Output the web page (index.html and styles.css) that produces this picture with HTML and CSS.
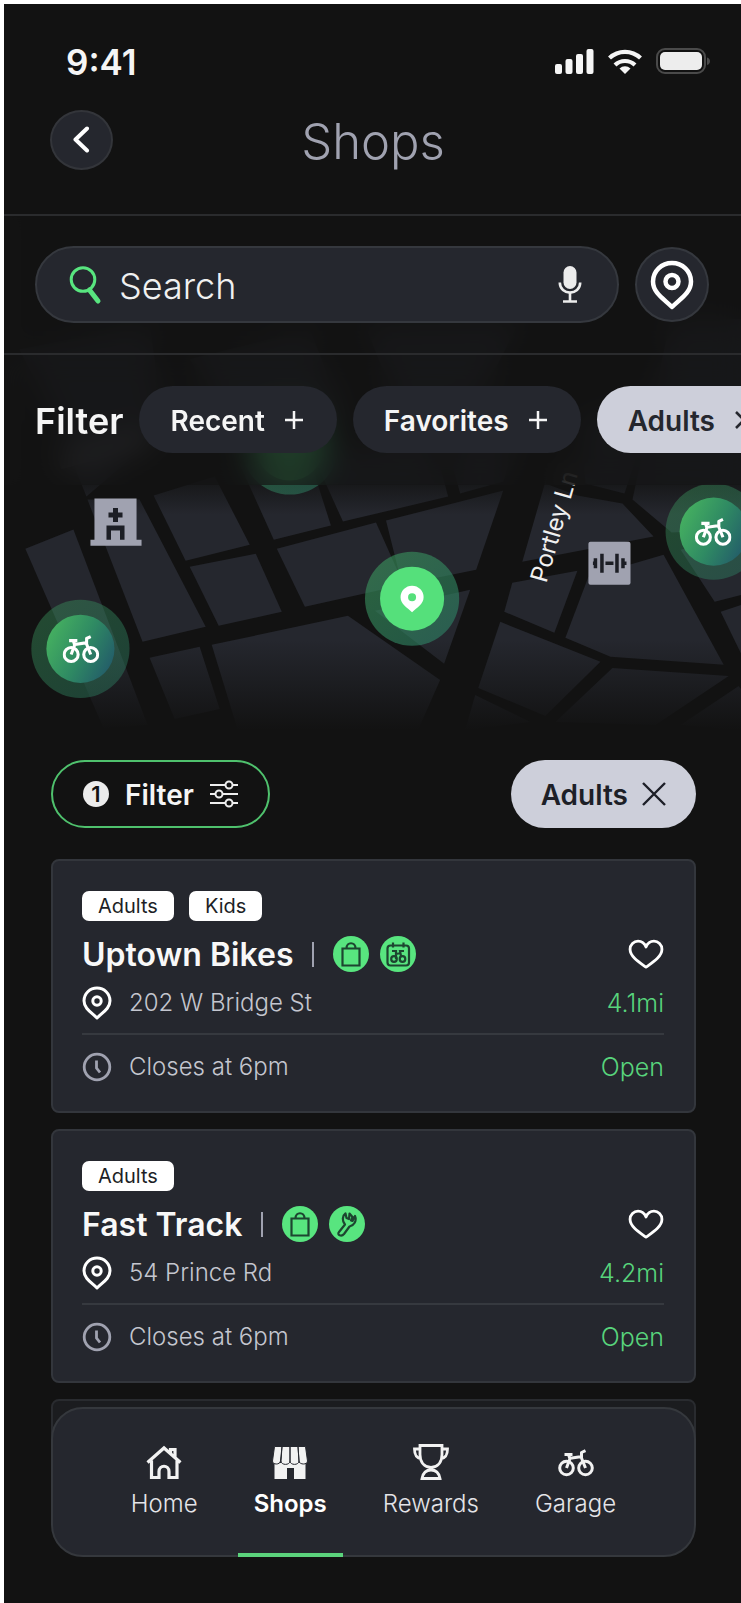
FILE: index.html
```html
<!DOCTYPE html>
<html lang="en">
<head>
<meta charset="utf-8">
<meta name="viewport" content="width=device-width, initial-scale=1">
<title>Shops</title>
<link rel="stylesheet" href="styles.css">
</head>
<body>
<svg class="defs" width="0" height="0" aria-hidden="true">
  <defs>
    <linearGradient id="pin-fill" x1="0" y1="0.3" x2="1" y2="0.8">
      <stop offset="0" stop-color="#45b060"/><stop offset="0.5" stop-color="#2f8a63"/><stop offset="1" stop-color="#22586a"/>
    </linearGradient>
    <linearGradient id="halo-fill" x1="0" y1="0" x2="1" y2="1">
      <stop offset="0" stop-color="#3d9a5c"/><stop offset="1" stop-color="#2c8068"/>
    </linearGradient>
    <linearGradient id="map-fade" x1="0" y1="0" x2="0" y2="1">
      <stop offset="0" stop-color="#121212" stop-opacity="0"/><stop offset="0.9" stop-color="#121212"/><stop offset="1" stop-color="#121212"/>
    </linearGradient>
    <linearGradient id="map-shade" x1="0" y1="0" x2="0" y2="1">
      <stop offset="0" stop-color="#121212" stop-opacity="0.7"/><stop offset="1" stop-color="#121212" stop-opacity="0"/>
    </linearGradient>
    <symbol id="bike" viewBox="0 0 36 28">
      <g fill="none" stroke="currentColor" stroke-width="3">
        <circle cx="8.500" cy="19" r="6.800"/><circle cx="27.500" cy="19" r="6.800"/>
        <path d="M8.500 19 12 9.500M10.500 9.500 24 7.500M6.500 5.500h8M10.500 5.500l1.500 4.500M27.500 19 23.500 9V3.500l4-1.800" stroke-linejoin="round"/>
      </g>
    </symbol>
    <symbol id="pin" viewBox="0 0 30 34">
      <path d="M15 2C7.800 2 2 7.700 2 14.800 2 22.500 9.500 26.500 15 32c5.500-5.500 13-9.500 13-17.200C28 7.700 22.200 2 15 2z" fill="none" stroke="currentColor" stroke-width="3" stroke-linejoin="round"/>
      <circle cx="15" cy="15" r="4.200" fill="none" stroke="currentColor" stroke-width="3"/>
    </symbol>
    <symbol id="clock" viewBox="0 0 30 30">
      <circle cx="15" cy="15" r="12.800" fill="none" stroke="currentColor" stroke-width="2.800"/>
      <path d="M14.500 8.500V16l3.500 4.500" fill="none" stroke="currentColor" stroke-width="2.800"/>
    </symbol>
    <symbol id="heart" viewBox="0 0 38 32">
      <path d="M19 30C12 25 2 19 2 11c0-5 4-8.700 8.500-8.700 3.800 0 7 2.500 8.500 6.200 1.500-3.700 4.700-6.200 8.500-6.200C32 2.300 36 6 36 11c0 8-10 14-17 19z" fill="none" stroke="currentColor" stroke-width="3" stroke-linejoin="round"/>
    </symbol>
    <symbol id="bag" viewBox="0 0 36 36">
      <circle cx="18" cy="18" r="18" fill="#58e57f"/>
      <path d="M9.500 12.500h17v17h-17zM13.500 12.500c0-7 9-7 9 0" fill="none" stroke="#1d4530" stroke-width="2.200"/>
    </symbol>
    <symbol id="calendar" viewBox="0 0 36 36">
      <circle cx="18" cy="18" r="18" fill="#58e57f"/>
      <g fill="none" stroke="#1d4530" stroke-width="2.200">
        <rect x="7.500" y="9.500" width="21.500" height="20" rx="3"/>
        <path d="M13 6.500v5M23.500 6.500v5M12 15h4v8M21 20l-1-5h4M16 18l5-1"/>
        <circle cx="14" cy="23" r="2.800"/><circle cx="22.500" cy="23" r="2.800"/>
      </g>
    </symbol>
    <symbol id="wrench" viewBox="0 0 36 36">
      <circle cx="18" cy="18" r="18" fill="#58e57f"/>
      <path d="M10 26 16 18.500C13 15 13 10 16.500 7.500L17.500 12l2.500 1 .5-5.500L23.500 11 22 14.500l1.500.5L26 10c2 5-1 9.500-5.500 10.500L15 28c-2.500 3-7.500 1-5-2z" fill="none" stroke="#1d4530" stroke-width="2.200" stroke-linejoin="round"/>
    </symbol>
  </defs>
</svg>

<div class="app">
  <header class="top">
    <div class="status">
      <span class="status-time">9:41</span>
      <svg class="status-icons" width="158" height="28" viewBox="0 0 158 28" role="img" aria-label="Signal, Wi-Fi, battery">
        <g fill="#f5f5f5">
          <rect x="1" y="16" width="7" height="10" rx="2"/><rect x="11.500" y="11" width="7" height="15" rx="2"/><rect x="22" y="6" width="7" height="20" rx="2"/><rect x="32.500" y="1" width="7" height="25" rx="2"/>
          <path d="M71 26l-5.500-5.500a8 8 0 0 1 11 0z"/>
        </g>
        <g fill="none" stroke="#f5f5f5" stroke-width="4.200">
          <path d="M61 17a14.500 14.500 0 0 1 20 0"/><path d="M55.500 10a22.500 22.500 0 0 1 31 0"/>
        </g>
        <rect x="103" y="1" width="48" height="24" rx="8" fill="none" stroke="#4a4a4a" stroke-width="2"/>
        <rect x="106" y="4" width="42" height="18" rx="5" fill="#ededed"/>
        <path d="M153 9.500c4 1 4 6.500 0 7.500z" fill="#4a4a4a"/>
      </svg>
    </div>
    <div class="titlebar">
      <button class="back" aria-label="Back">
        <svg width="18" height="28" viewBox="0 0 18 28"><path d="M14 2.500 2.500 13.500 14 24.500" fill="none" stroke="#fff" stroke-width="4" stroke-linecap="round" stroke-linejoin="round"/></svg>
      </button>
      <h1 class="title">Shops</h1>
    </div>
  </header>

  <section class="stage" aria-label="Map">
    <svg class="map" viewBox="4 215 737 516" preserveAspectRatio="xMidYMin slice">
      <g fill="#25272e">
        <path d="M26 549 74 530 148 725 104 728z"/>
        <path d="M20 350 150 325 165 430 87 497 60 430z"/>
        <path d="M88 500 140 500 206 627 143 642z"/>
        <path d="M154 496 215 477 250 545 186 561z"/>
        <path d="M190 567 256 554 282 612 219 626z"/>
        <path d="M190 360 310 330 345 420 240 440z"/>
        <path d="M240 465 310 460 331 526 274 540z"/>
        <path d="M315 460 430 430 448 497 343 522z"/>
        <path d="M365 325 520 320 480 400 400 415z"/>
        <path d="M445 440 520 430 503 482 460 494z"/>
        <path d="M277 549 376 523 398 572 395 587 305 607z"/>
        <path d="M386 521 503 491 476 570 402 585z"/>
        <path d="M212 645 348 616 440 680 418 730 238 730z"/>
        <path d="M375 611 470 590 444 664z"/>
        <path d="M150 658 200 647 220 709 175 719z"/>
        <path d="M560 430 545 484 577 496 622 504 653 537 522 562z"/>
        <path d="M580 420 655 400 624 494 585 484z"/>
        <path d="M670 320 741 320 741 530 671 533 632 500z"/>
        <path d="M512 583 577 571 554 633 504 612z"/>
        <path d="M588 577 663 555 723 665 610 657 565 638z"/>
        <path d="M500 622 600 662 545 716 478 688z"/>
        <path d="M612 668 728 676 655 725 555 722z"/>
        <path d="M680 550 741 535 741 595 714 602z"/>
        <path d="M720 612 741 605 741 655z"/>
        <path d="M738 686 741 690 741 730 680 725z"/>
        <path d="M475 695 530 722 465 730z"/>
      </g>
      <path d="M60 463 150 438" stroke="#5a5a60" stroke-width="14"/>
      <rect x="4" y="485" width="737" height="30" fill="url(#map-shade)"/>
      <rect x="4" y="640" width="737" height="100" fill="url(#map-fade)"/>

      <g fill="#a0a2b0">
        <path d="M95 499h42v41h5v6H91v-6h4z"/>
        <path d="M113.500 508.500h5v4.500h4.500v5h-4.500v4.500h-5V518H109v-5h4.500zM107 526h18v14h-4.500v-9h-9v9H107z" fill="#1c1e25"/>
      </g>
      <rect x="588" y="542" width="42" height="43" rx="2" fill="#a0a2b0"/>
      <path d="M595 558.500v10M601.500 554v19M605 563.500h8M616.500 554v19M622.500 558.500v10M592.500 563.500h2M623 563.500h3" stroke="#1c1e25" stroke-width="3.500" fill="none"/>
      <text class="street" x="546" y="584" transform="rotate(-74 546 584)">Portley Ln</text>

      <circle cx="290" cy="447" r="48" fill="url(#halo-fill)" opacity="0.5"/>
      <circle cx="290" cy="447" r="34" fill="#58e57f" opacity="0.7"/>

      <circle cx="81" cy="649" r="49" fill="url(#halo-fill)" opacity="0.42"/>
      <circle cx="81" cy="649" r="34" fill="url(#pin-fill)"/>
      <svg x="63" y="635" width="37" height="29" color="#fff"><use href="#bike"/></svg>

      <circle cx="412" cy="599" r="47" fill="url(#halo-fill)" opacity="0.6"/>
      <circle cx="412" cy="599" r="32" fill="#55e07b"/>
      <path d="M412 586a11.500 11.500 0 0 0-11.500 11.500c0 7 6.500 10 11.500 15 5-5 11.500-8 11.500-15A11.500 11.500 0 0 0 412 586zm0 7.500a4 4 0 1 1 0 8 4 4 0 0 1 0-8z" fill="#fff" fill-rule="evenodd"/>

      <circle cx="713" cy="532" r="48" fill="url(#halo-fill)" opacity="0.42"/>
      <circle cx="713" cy="532" r="34" fill="url(#pin-fill)"/>
      <svg x="694" y="518" width="37" height="29" color="#fff"><use href="#bike"/></svg>
    </svg>

    <form class="panel search-panel">
      <label class="search">
        <svg width="34" height="40" viewBox="0 0 34 40" aria-hidden="true"><circle cx="14" cy="14.500" r="11.800" fill="none" stroke="#58e57f" stroke-width="3"/><path d="M20.500 25 29 36" stroke="#58e57f" stroke-width="5" stroke-linecap="round"/></svg>
        <input class="search-input" type="text" placeholder="Search" aria-label="Search">
        <svg width="24" height="38" viewBox="0 0 24 38" aria-hidden="true"><rect x="5.500" y="0" width="13" height="23" rx="6.500" fill="#ececec"/><path d="M1.800 16.500c0 13.500 20.400 13.500 20.400 0M12 27v8M5 35.500h14" fill="none" stroke="#ececec" stroke-width="2.600"/></svg>
      </label>
      <button class="locate" type="button" aria-label="Near me">
        <svg width="44" height="50" viewBox="0 0 44 50"><path d="M22 3C11.500 3 3 11 3 21.500 3 33 14 39 22 47c8-8 19-14 19-25.500C41 11 32.500 3 22 3z" fill="none" stroke="#fff" stroke-width="4.500" stroke-linejoin="round"/><circle cx="22" cy="21.500" r="6.500" fill="none" stroke="#fff" stroke-width="4.500"/></svg>
      </button>
    </form>

    <div class="panel filter-panel">
      <h2 class="filter-title">Filter</h2>
      <button class="chip"><span>Recent</span><svg width="18" height="18" viewBox="0 0 18 18"><path d="M9 0v18M0 9h18" stroke="currentColor" stroke-width="2.500"/></svg></button>
      <button class="chip"><span>Favorites</span><svg width="18" height="18" viewBox="0 0 18 18"><path d="M9 0v18M0 9h18" stroke="currentColor" stroke-width="2.500"/></svg></button>
      <button class="chip chip-on"><span>Adults</span><svg width="18" height="18" viewBox="0 0 18 18"><path d="M1 1l16 16M17 1 1 17" stroke="currentColor" stroke-width="2.500"/></svg></button>
    </div>
  </section>

  <main class="content">
    <div class="toolbar">
      <button class="pill pill-outline">
        <span class="count">1</span>
        <span class="pill-label">Filter</span>
        <svg width="28" height="28" viewBox="0 0 28 28"><path d="M0 5h28M0 14h28M0 23h28" stroke="#eee" stroke-width="2"/><g fill="#121212" stroke="#eee" stroke-width="2"><circle cx="19" cy="5" r="3.500"/><circle cx="9" cy="14" r="3.500"/><circle cx="19" cy="23" r="3.500"/></g></svg>
      </button>
      <button class="pill pill-on">
        <span class="pill-label">Adults</span>
        <svg width="24" height="24" viewBox="0 0 24 24"><path d="M1 1l22 22M23 1 1 23" stroke="currentColor" stroke-width="2.400"/></svg>
      </button>
    </div>

    <article class="card">
      <div class="tags"><span class="tag">Adults</span><span class="tag">Kids</span></div>
      <div class="row name-row">
        <h3 class="name">Uptown Bikes</h3>
        <span class="bar"></span>
        <span class="badges"><svg width="36" height="36"><use href="#bag"/></svg><svg width="36" height="36"><use href="#calendar"/></svg></span>
        <button class="like" aria-label="Save Uptown Bikes"><svg width="36" height="30"><use href="#heart"/></svg></button>
      </div>
      <div class="row address-row">
        <svg class="pin" width="30" height="34"><use href="#pin"/></svg>
        <span>202 W Bridge St</span><span class="value">4.1mi</span>
      </div>
      <div class="row hours-row">
        <svg class="clock" width="30" height="30"><use href="#clock"/></svg>
        <span>Closes at 6pm</span><span class="value">Open</span>
      </div>
    </article>

    <article class="card">
      <div class="tags"><span class="tag">Adults</span></div>
      <div class="row name-row">
        <h3 class="name">Fast Track</h3>
        <span class="bar"></span>
        <span class="badges"><svg width="36" height="36"><use href="#bag"/></svg><svg width="36" height="36"><use href="#wrench"/></svg></span>
        <button class="like" aria-label="Save Fast Track"><svg width="36" height="30"><use href="#heart"/></svg></button>
      </div>
      <div class="row address-row">
        <svg class="pin" width="30" height="34"><use href="#pin"/></svg>
        <span>54 Prince Rd</span><span class="value">4.2mi</span>
      </div>
      <div class="row hours-row">
        <svg class="clock" width="30" height="30"><use href="#clock"/></svg>
        <span>Closes at 6pm</span><span class="value">Open</span>
      </div>
    </article>

    <div class="dock">
      <div class="peek"></div>
      <nav class="nav" aria-label="Main">
        <a class="nav-item" href="#home">
          <svg width="38" height="38" viewBox="0 0 38 38"><path d="M2.500 19.500 19 5l16.500 14.500M6.500 17.500v17h7.500v-6c0-7 10-7 10 0v6h8v-17M25.500 10V6.500H30V14" fill="none" stroke="#f2f2f2" stroke-width="3.200"/></svg>
          <span>Home</span>
        </a>
        <a class="nav-item nav-active" href="#shops" aria-current="page">
          <svg width="38" height="38" viewBox="0 0 38 38"><path d="M3.500 20h31v16H23V25h-7v11H3.500z" fill="#f2f2f2"/><path d="M3.500 3.500H11L9.500 18c-.5 4-8 4-8 0zM11 3.500h8V18c0 4.500-9 4.500-9 0zM19 3.500h8L28 18c0 4.500-9 4.500-9 0zM27 3.500h7.500l2 14.500c0 4-8 4-8.500 0z" fill="#f2f2f2" stroke="#25272e" stroke-width="1"/></svg>
          <span>Shops</span>
        </a>
        <a class="nav-item" href="#rewards">
          <svg width="38" height="38" viewBox="0 0 38 38"><path d="M8 2.500h22v9c0 8-4.500 12.500-11 13-6.500-.5-11-5-11-13zM8 6H2.500c0 5 1 9 7 10M30 6h5.500c0 5-1 9-7 10M19 24.500v2.500c-5 0-8 3-9 8.500h18c-1-5.500-4-8.500-9-8.500" fill="none" stroke="#f2f2f2" stroke-width="2.800"/></svg>
          <span>Rewards</span>
        </a>
        <a class="nav-item" href="#garage">
          <svg width="38" height="38" viewBox="0 0 38 38" color="#f2f2f2"><use href="#bike" x="1" y="6" width="36" height="28"/></svg>
          <span>Garage</span>
        </a>
      </nav>
    </div>
  </main>
</div>
</body>
</html>
```

FILE: styles.css
```css
* { box-sizing: border-box; }

body {
  margin: 0;
  padding: 4px 0 0 4px;
  background: #fff;
  font-family: Inter, "Liberation Sans", sans-serif;
  color: #f5f5f5;
}

h1, h2, h3 { margin: 0; }
svg { display: block; flex: none; }
button {
  font: inherit;
  color: inherit;
  border: 0;
  background: none;
  padding: 0;
}

.defs { position: absolute; }

.app {
  background: #121212;
  min-height: calc(100vh - 4px);
  overflow: hidden;
}

/* Status and title */
.top { padding: 36px 29px 44px 46px; }
.status {
  display: flex;
  align-items: center;
  justify-content: space-between;
  height: 44px;
  padding-left: 16px;
}
.status-time { font-size: 35px; font-weight: 600; line-height: 44px; }
.titlebar {
  display: grid;
  grid-template-columns: 63px 1fr 79px;
  align-items: center;
  height: 60px;
  margin-top: 26px;
}
.back {
  display: grid;
  place-items: center;
  width: 63px;
  height: 60px;
  border: 2px solid #33353a;
  border-radius: 50%;
  background: #25272e;
}
.title {
  padding-top: 4px;
  font-size: 49px;
  line-height: 56px;
  font-weight: 300;
  text-align: center;
  color: #a0a2b0;
}

/* Map with its overlaid panels */
.stage { position: relative; padding-bottom: 246px; }
.map { position: absolute; top: 0; left: 0; width: 100%; height: 100%; }
.street { font-size: 24px; fill: #f0f0f0; }
.panel {
  position: relative;
  display: flex;
  align-items: center;
  border-top: 2px solid #2a2b2d;
  background: rgba(18, 18, 18, 0.76);
  backdrop-filter: blur(14px);
}
.search-panel { gap: 16px; padding: 30px 32px 30px 31px; }
.search {
  flex: 1;
  min-width: 0;
  display: flex;
  align-items: center;
  gap: 16px;
  height: 77px;
  padding: 0 35px 0 32px;
  border: 2px solid #35383e;
  border-radius: 39px;
  background: #25272e;
}
.search-input {
  flex: 1;
  width: 0;
  min-width: 0;
  border: 0;
  padding: 2px 0 0;
  background: none;
  font: 300 36px/44px Inter, "Liberation Sans", sans-serif;
  color: #f5f5f5;
}
.search-input::placeholder { color: #f0f0f0; opacity: 1; }
.locate {
  flex: none;
  display: grid;
  place-items: center;
  width: 74px;
  height: 75px;
  border: 2px solid #35383e;
  border-radius: 50%;
  background: #25272e;
}
.filter-panel { gap: 16px; padding: 31px 0 32px 31px; overflow: hidden; }
.filter-title { padding-top: 2px; font-size: 36px; line-height: 44px; font-weight: 600; }
.chip {
  flex: none;
  display: flex;
  align-items: center;
  gap: 20px;
  height: 67px;
  padding: 0 34px 0 31px;
  border-radius: 34px;
  background: #25272e;
  font-size: 28px;
  font-weight: 600;
}
.chip span, .pill-label { padding-top: 2px; }
.chip-on { background: #cdcfda; color: #25272e; }

/* List */
.content { padding: 29px 45px 46px 47px; }
.toolbar {
  display: flex;
  justify-content: space-between;
  margin-bottom: 31px;
}
.pill {
  display: flex;
  align-items: center;
  gap: 16px;
  height: 68px;
  padding: 0 30px;
  border-radius: 34px;
  font-size: 28px;
  font-weight: 600;
}
.pill-outline { border: 2px solid #4fc16d; }
.pill-on { gap: 14px; background: #cdcfda; color: #1d1f27; }
.count {
  width: 26px;
  height: 26px;
  border-radius: 50%;
  background: #ececec;
  color: #121212;
  font-size: 22px;
  line-height: 26px;
  text-align: center;
}

.card {
  margin-bottom: 16px;
  padding: 30px 30px 21px 29px;
  border: 2px solid #33363c;
  border-radius: 8px;
  background: #25272e;
}
.tags { display: flex; gap: 15px; height: 30px; }
.tag {
  padding: 0 16px;
  border-radius: 7px;
  background: #fff;
  color: #1d1f27;
  font-size: 20px;
  line-height: 30px;
}
.row { display: flex; align-items: center; font-size: 24px; font-weight: 300; line-height: 32px; color: #c4c6cf; }
.row .value { margin-left: auto; font-size: 25px; color: #58d47c; }
.name-row { height: 36px; margin-top: 15px; }
.name { padding-top: 2px; font-size: 32px; line-height: 36px; font-weight: 600; color: #f8f8f8; }
.bar { width: 2px; height: 25px; margin: 0 19px; background: #a0a2b0; }
.badges { display: flex; gap: 11px; }
.like { margin-left: auto; color: #fff; }
.address-row { gap: 17px; height: 63px; border-bottom: 2px solid #36393f; }
.hours-row { gap: 17px; height: 46px; margin-top: 9px; }
.pin { color: #fff; }
.clock { color: #a0a2b0; }

/* Bottom navigation over the next card */
.dock { display: grid; }
.peek {
  grid-area: 1 / 1;
  height: 100px;
  border: 2px solid #292b2f;
  border-radius: 8px;
  background: #1b1c1f;
}
.nav {
  grid-area: 1 / 1;
  display: flex;
  justify-content: center;
  gap: 24px;
  height: 150px;
  margin-top: 8px;
  border: 2px solid #35383d;
  border-radius: 32px;
  background: #25272e;
}
.nav-item {
  display: flex;
  flex-direction: column;
  align-items: center;
  gap: 7px;
  margin-bottom: -2px;
  padding: 34px 16px 0;
  border-bottom: 4px solid transparent;
  color: #e4e4e8;
  text-decoration: none;
  font-size: 24px;
  line-height: 32px;
  font-weight: 300;
}
.nav-active { border-bottom-color: #5bd37c; color: #fff; font-weight: 600; }
```
